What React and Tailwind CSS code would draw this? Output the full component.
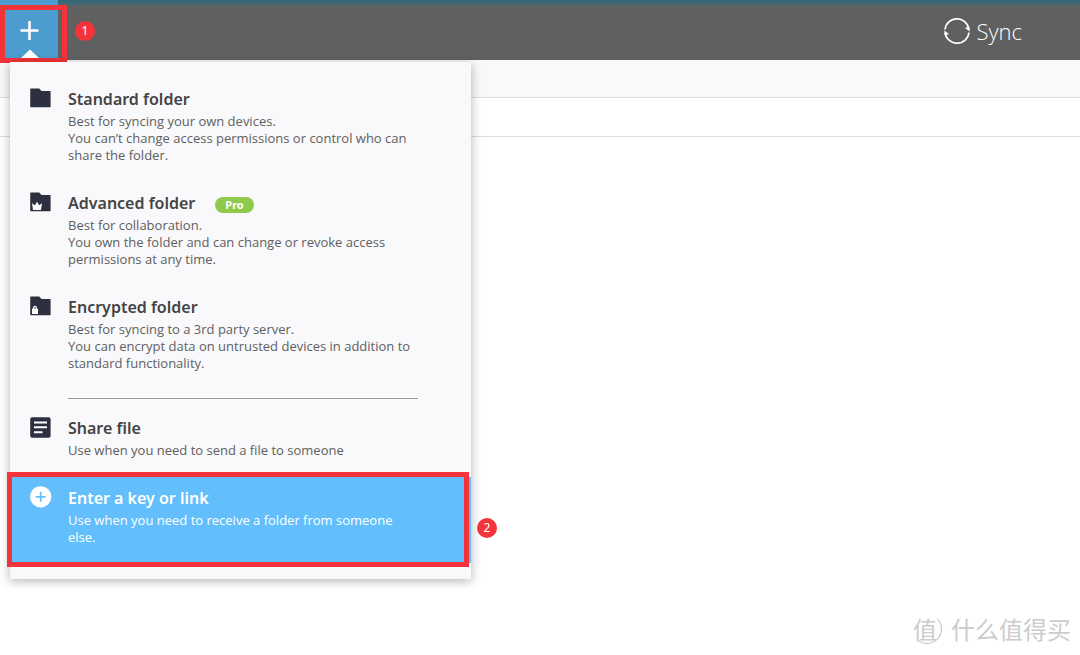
import React from "react";

function FolderIcon({ children }) {
  return (
    <svg width="21" height="20" viewBox="0 0 21 20" aria-hidden="true">
      <path d="M1 0.5h8.2L11.5 3H20a.6.6 0 0 1 .6.6v15a.6.6 0 0 1-.6.6H1a.8.8 0 0 1-.8-.8V1.300a.8.8 0 0 1 .8-.8z" fill="#2d3040" />
      {children}
    </svg>
  );
}

function Crown() {
  return (
    <path d="M2 11.300l2.900 2 2.100-3.500 2.100 3.500 2.900-2-1 6.600H3z" fill="#fff" />
  );
}

function Lock() {
  return (
    <g>
      <rect x="2" y="12.500" width="6" height="5.500" rx="0.500" fill="#fff" />
      <path d="M3.700 13v-1.300a1.300 1.300 0 0 1 2.600 0V13" fill="none" stroke="#fff" strokeWidth="1.200" />
    </g>
  );
}

function FileIcon() {
  return (
    <svg width="21" height="21" viewBox="0 0 21 21" aria-hidden="true">
      <rect x="0.200" y="0.300" width="20.400" height="20.400" rx="2" fill="#2d3040" />
      <path d="M4 5.400h13M4 10.300h13M4 15.200h8.500" stroke="#fff" strokeWidth="2" />
    </svg>
  );
}

function PlusCircle() {
  return (
    <svg width="22" height="22" viewBox="0 0 22 22" aria-hidden="true">
      <circle cx="10.700" cy="10.800" r="10.600" fill="#fff" />
      <path d="M10.700 5.800v10M5.700 10.800h10" stroke="#62bffc" strokeWidth="1.700" />
    </svg>
  );
}

function SyncLogo() {
  return (
    <svg width="26" height="26" viewBox="0 0 26 26" fill="none" stroke="#fff" aria-hidden="true">
      <path d="M1 11.500A12 12 0 0 1 24.800 11" strokeWidth="1.700" />
      <path d="M25 14.500A12 12 0 0 1 1.200 15" strokeWidth="1.700" />
      <path d="M20.800 9.800l4.800 3.600V9.200z" fill="#fff" stroke="none" />
      <path d="M5.200 16.200L.4 12.600v4.200z" fill="#fff" stroke="none" />
    </svg>
  );
}

function MenuItem({ icon, title, badge, lines, active = false }) {
  return (
    <button
      type="button"
      role="menuitem"
      className={`flex w-full items-start pt-[9px] pr-12 pl-5 text-left ${
        active ? "bg-[#62bffc] pb-[17px] text-white" : "pb-[18px] text-[#606060]"
      }`}
    >
      <span className="flex h-[22px] w-[38px] shrink-0 items-center">{icon}</span>
      <span className="block min-w-0">
        <span className={`flex h-6 items-center gap-5 text-base font-semibold ${active ? "text-white" : "text-[#444444]"}`}>
          {title}
          {badge && (
            <span className="mt-1 flex h-4 items-center rounded-full bg-[#8fca4b] px-[10px] text-[11px] font-bold text-white">
              {badge}
            </span>
          )}
        </span>
        <span className="mt-[2px] block font-['Open_Sans',sans-serif] text-[13px] leading-[17px]">
          {lines.map((line) => (
            <span key={line} className="block">
              {line}
            </span>
          ))}
        </span>
      </span>
    </button>
  );
}

function StepMarker({ children }) {
  return (
    <span className="flex size-5 items-center justify-center rounded-full bg-[#f5333a] text-xs text-white">
      {children}
    </span>
  );
}

export default function App() {
  return (
    <div className="relative min-h-screen bg-white font-['Noto_Sans','Noto_Sans_CJK_SC',sans-serif]">
      <header className="relative flex h-[60px] items-center justify-between bg-[#606060] bg-linear-to-b from-[#2f6678] from-0% via-[#3d6875] via-5% to-[#606060] to-12% pr-[58px]">
        <button
          type="button"
          aria-label="Add"
          className="relative flex h-full w-[58px] items-center justify-center bg-[#4c9ccf]"
        >
          <svg width="58" height="60" viewBox="0 0 58 60" aria-hidden="true">
            <path d="M29.500 21v19M20.500 30.500h18" stroke="#fff" strokeWidth="2.600" />
            <path d="M21 58l9-8.500 9 8.500z" fill="#fff" />
          </svg>
        </button>
        <div className="flex items-center gap-[6px] pt-[2px] text-white">
          <SyncLogo />
          <span className="font-['Open_Sans',sans-serif] text-[22px] leading-7 font-light">Sync</span>
        </div>
        <div className="pointer-events-none absolute top-[5px] left-0 h-[58px] w-[67px] border-5 border-[#f5333a]" />
        <div className="absolute top-[21px] left-[75px]">
          <StepMarker>1</StepMarker>
        </div>
      </header>

      <div className="h-[38px] border-b border-[#dfdfdf] bg-[#f9f9fb]" />
      <div className="h-[39px] border-b border-[#dfdfdf]" />

      <div className="absolute top-[62px] left-[10px] w-[461px] bg-[#f9f9fb] py-4 shadow-[0_2px_10px_rgba(0,0,0,0.3)]" role="menu">
        <MenuItem
          icon={<FolderIcon />}
          title="Standard folder"
          lines={["Best for syncing your own devices.", "You can’t change access permissions or control who can share the folder."]}
        />
        <MenuItem
          icon={<FolderIcon><Crown /></FolderIcon>}
          title="Advanced folder"
          badge="Pro"
          lines={["Best for collaboration.", "You own the folder and can change or revoke access permissions at any time."]}
        />
        <MenuItem
          icon={<FolderIcon><Lock /></FolderIcon>}
          title="Encrypted folder"
          lines={["Best for syncing to a 3rd party server.", "You can encrypt data on untrusted devices in addition to standard functionality."]}
        />
        <hr className="mt-2 mr-[53px] mb-2 ml-[58px] border-[#999999]" />
        <MenuItem icon={<FileIcon />} title="Share file" lines={["Use when you need to send a file to someone"]} />
        <div className="relative">
          <MenuItem
            active
            icon={<PlusCircle />}
            title="Enter a key or link"
            lines={["Use when you need to receive a folder from someone else."]}
          />
          <div className="pointer-events-none absolute -top-[5px] right-[2px] -bottom-1 -left-[3px] border-5 border-[#f5333a]" />
          <div className="absolute top-[41px] -right-[26px]">
            <StepMarker>2</StepMarker>
          </div>
        </div>
      </div>

      <div className="absolute right-[9px] bottom-[10px] flex items-center gap-[9px] font-['Noto_Sans_CJK_SC',sans-serif] text-[#cccccc]">
        <span className="flex size-[30px] items-center justify-start rounded-full border border-transparent border-r-[#bdbdbd] border-b-[#bdbdbd] text-[24px] leading-none">
          值
        </span>
        <span className="text-[24px] leading-8">什么值得买</span>
      </div>
    </div>
  );
}
